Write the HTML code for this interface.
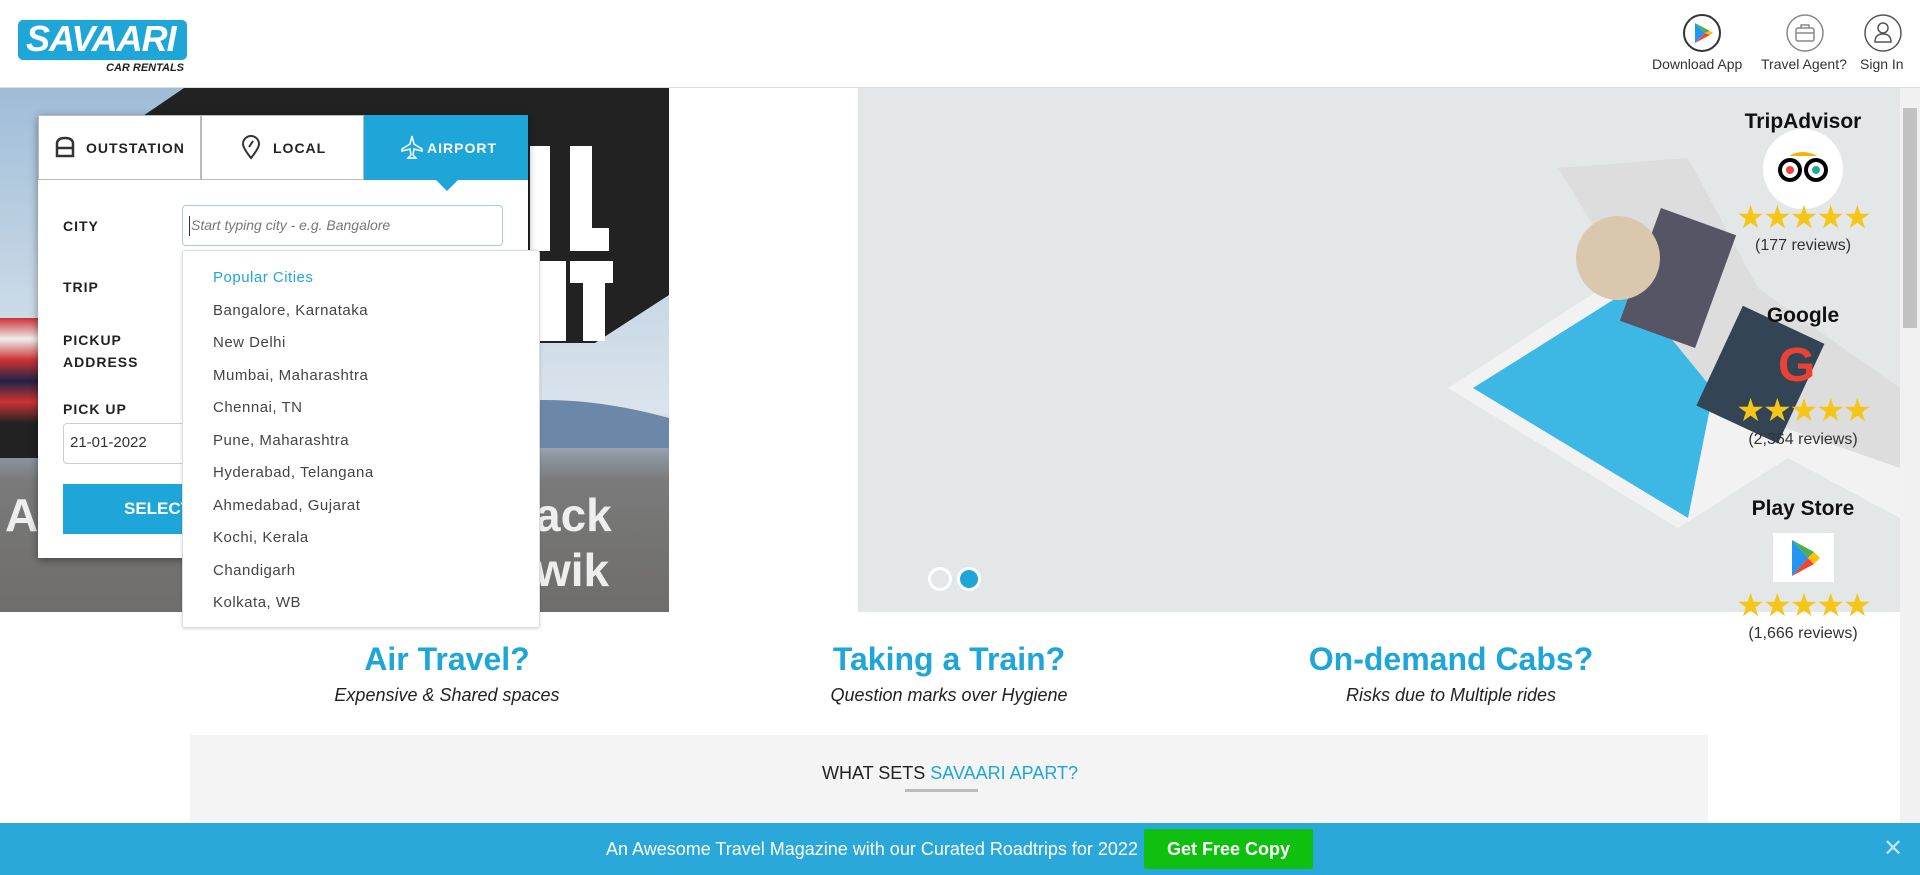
<!DOCTYPE html>
<html><head><meta charset="utf-8"><style>
*{margin:0;padding:0;box-sizing:border-box}
body{width:1920px;height:875px;overflow:hidden;background:#fff;font-family:"Liberation Sans","DejaVu Sans",sans-serif;position:relative;color:#333}
.a{position:absolute}
.hdr{left:0;top:0;width:1920px;height:88px;border-bottom:1px solid #ddd;background:#fff}
.lbl{font-size:14px;font-weight:bold;letter-spacing:1px;color:#222}
.city{font-size:15px;color:#444;letter-spacing:.5px;left:30px}
.star{color:#f5c518;font-size:32px;letter-spacing:-2px;width:140px;text-align:center}
.rv{font-size:16px;color:#333;width:200px;text-align:center}
h2{position:absolute;font-size:32px;color:#1fa6d9;font-weight:bold;width:500px;text-align:center}
.sub{position:absolute;font-size:18px;font-style:italic;color:#222;width:500px;text-align:center}
</style></head><body>
<div class="a hdr"></div>
<div class="a" style="left:18px;top:20px;width:169px;height:40px;background:#1fa6d9;border-radius:5px"></div>
<div class="a" style="left:26px;top:18px;font-size:36px;font-weight:bold;font-style:italic;color:#fff;letter-spacing:-1px">SAVAARI</div>
<div class="a" style="left:106px;top:62px;font-size:11px;font-weight:bold;font-style:italic;color:#222">CAR RENTALS</div>
<svg class="a" style="left:1682px;top:13px" width="40" height="40" viewBox="0 0 40 40"><circle cx="20" cy="20" r="18" fill="none" stroke="#333" stroke-width="2"/><path d="M13 10 L13 30 L23 20 Z" fill="#2196f3"/><path d="M13 10 L28 18 L23 20 Z" fill="#4caf50"/><path d="M13 30 L28 22 L23 20 Z" fill="#f44336"/><path d="M28 18 L31 20 L28 22 L23 20Z" fill="#ffc107"/></svg>
<svg class="a" style="left:1785px;top:13px" width="40" height="40" viewBox="0 0 40 40"><circle cx="20" cy="20" r="18" fill="none" stroke="#888" stroke-width="1.5"/><rect x="11" y="15" width="18" height="13" rx="2" fill="none" stroke="#888" stroke-width="1.5"/><path d="M16 15 V12 H24 V15 M11 20 H29" fill="none" stroke="#888" stroke-width="1.5"/></svg>
<svg class="a" style="left:1863px;top:13px" width="40" height="40" viewBox="0 0 40 40"><circle cx="20" cy="20" r="18" fill="none" stroke="#555" stroke-width="1.5"/><circle cx="20" cy="15" r="5" fill="none" stroke="#555" stroke-width="1.5"/><path d="M12 29 Q12 21 20 21 Q28 21 28 29 Z" fill="none" stroke="#555" stroke-width="1.5"/></svg>
<div class="a" style="left:1652px;top:56px;font-size:14px;color:#333">Download App</div>
<div class="a" style="left:1761px;top:56px;font-size:14px;color:#333">Travel Agent?</div>
<div class="a" style="left:1860px;top:56px;font-size:14px;color:#333">Sign In</div>
<!-- left hero -->
<div class="a" style="left:0;top:88px;width:669px;height:524px;overflow:hidden;background:linear-gradient(180deg,#9fbdd8 0%,#c8d8e6 40%,#dbe4ec 62%,#8e97a3 70%,#7a7a7a 75%,#6e6d6b 100%)">
<svg width="669" height="524" style="position:absolute;left:0;top:0"><polygon points="184,0 669,0 669,207 595,255 150,255 140,30" fill="#222"/>
<rect x="530" y="58" width="20" height="105" fill="#fff"/><rect x="570" y="58" width="22" height="105" fill="#fff"/><rect x="570" y="140" width="39" height="23" fill="#fff"/>
<rect x="538" y="173" width="28" height="80" fill="#fff"/><rect x="570" y="173" width="43" height="22" fill="#fff"/><rect x="583" y="173" width="22" height="80" fill="#fff"/>
<path d="M470 320 Q560 300 669 330 L669 360 L470 360Z" fill="#6c88a8"/>
</svg>
<div class="a" style="left:535px;top:400px;font-size:46px;font-weight:bold;color:#eee">ack</div>
<div class="a" style="left:535px;top:455px;font-size:46px;font-weight:bold;color:#eee">wik</div>
<div class="a" style="left:5px;top:400px;font-size:46px;font-weight:bold;color:#eee">A</div>
<div class="a" style="left:0;top:230px;width:38px;height:140px;background:linear-gradient(#c33 0,#eee 15%,#c33 30%,#224 45%,#c33 60%,#222 75%)"></div>
</div>
<!-- right banner -->
<div class="a" style="left:858px;top:88px;width:1042px;height:524px;background:#e4e7e8;overflow:hidden">
<svg width="1042" height="524" style="position:absolute;left:0;top:0">
<polygon points="590,300 790,170 900,200 1042,310 1042,430 930,370 820,440" fill="#f2f2f2"/>
<polygon points="615,300 790,190 870,230 830,430" fill="#3db7e4"/>
<polygon points="700,80 830,70 900,200 1042,300 1042,380 870,320 780,210" fill="#ddd"/>
<rect x="780" y="130" width="80" height="120" fill="#556" transform="rotate(20 820 190)"/>
<rect x="860" y="230" width="90" height="110" fill="#345" transform="rotate(25 900 280)"/>
<circle cx="760" cy="170" r="42" fill="#d9c8ad"/>
</svg>
<div class="a" style="left:70px;top:479px;width:24px;height:24px;border-radius:50%;border:3px solid #fff"></div>
<div class="a" style="left:99px;top:479px;width:24px;height:24px;border-radius:50%;background:#1fa6d9;border:3px solid #fff"></div>
</div>
<div class="a" style="left:1900px;top:88px;width:20px;height:735px;background:#f1f1f1"></div>
<div class="a" style="left:1903px;top:108px;width:14px;height:220px;background:#c1c1c1"></div>
<!-- ratings -->
<div class="a" style="left:1703px;top:110px;width:200px;text-align:center;font-size:21px;font-weight:bold;color:#111">TripAdvisor</div>
<div class="a" style="left:1763px;top:129px;width:80px;height:80px;border-radius:50%;background:#fff"></div>
<svg class="a" style="left:1775px;top:148px" width="56" height="40" viewBox="0 0 56 40"><path d="M14 8 Q28 0 42 8 Z" fill="#f5b400"/><circle cx="15" cy="22" r="12" fill="#000"/><circle cx="41" cy="22" r="12" fill="#000"/><circle cx="15" cy="22" r="8" fill="#fff"/><circle cx="41" cy="22" r="8" fill="#fff"/><circle cx="15" cy="22" r="4" fill="#e44"/><circle cx="41" cy="22" r="4" fill="#2a9"/></svg>
<div class="a star" style="left:1733px;top:198px">★★★★★</div>
<div class="a rv" style="left:1703px;top:237px">(177 reviews)</div>
<div class="a" style="left:1703px;top:304px;width:200px;text-align:center;font-size:21px;font-weight:bold;color:#111">Google</div>
<div class="a" style="left:1778px;top:338px;font-size:48px;font-weight:bold;color:#ea4335">G</div>
<div class="a star" style="left:1733px;top:391px">★★★★★</div>
<div class="a rv" style="left:1703px;top:431px">(2,364 reviews)</div>
<div class="a" style="left:1703px;top:497px;width:200px;text-align:center;font-size:21px;font-weight:bold;color:#111">Play Store</div>
<div class="a" style="left:1773px;top:533px;width:61px;height:49px;background:#fff"></div>
<svg class="a" style="left:1788px;top:538px" width="34" height="40" viewBox="0 0 34 40"><path d="M4 2 L4 38 L20 20Z" fill="#2196f3"/><path d="M4 2 L26 14 L20 20Z" fill="#4caf50"/><path d="M4 38 L26 26 L20 20Z" fill="#f44336"/><path d="M26 14 L32 20 L26 26 L20 20Z" fill="#ffc107"/></svg>
<div class="a star" style="left:1733px;top:586px">★★★★★</div>
<div class="a rv" style="left:1703px;top:625px">(1,666 reviews)</div>
<!-- form card -->
<div class="a" style="left:38px;top:115px;width:490px;height:443px;background:#fff;box-shadow:0 2px 8px rgba(0,0,0,.4)"></div>
<div class="a" style="left:38px;top:115px;width:163px;height:65px;border:1px solid #bbb;background:#fff"></div>
<div class="a" style="left:201px;top:115px;width:163px;height:65px;border:1px solid #bbb;background:#fff"></div>
<div class="a" style="left:364px;top:115px;width:164px;height:65px;background:#1fa6d9"></div>
<div class="a" style="left:435px;top:179px;width:0;height:0;border-left:12px solid transparent;border-right:12px solid transparent;border-top:12px solid #1fa6d9"></div>
<svg class="a" style="left:55px;top:136px" width="20" height="22" viewBox="0 0 20 22"><path d="M2 20 V8 Q2 2 10 2 Q18 2 18 8 V20 Z M2 12 H18" fill="none" stroke="#333" stroke-width="2.5"/></svg>
<div class="a lbl" style="left:86px;top:140px">OUTSTATION</div>
<svg class="a" style="left:241px;top:134px" width="20" height="26" viewBox="0 0 20 26"><path d="M10 24 Q2 14 2 10 A8 8 0 0 1 18 10 Q18 14 10 24Z" fill="none" stroke="#333" stroke-width="2"/><path d="M8 13 L12 7" stroke="#333" stroke-width="2"/></svg>
<div class="a lbl" style="left:273px;top:140px">LOCAL</div>
<svg class="a" style="left:400px;top:134px" width="24" height="26" viewBox="0 0 24 26"><path d="M12 2 L14 10 L22 15 V17 L14 15 L13 21 L16 24 H8 L11 21 L10 15 L2 17 V15 L10 10Z" fill="none" stroke="#fff" stroke-width="1.5"/></svg>
<div class="a lbl" style="left:427px;top:140px;color:#fff">AIRPORT</div>
<div class="a lbl" style="left:63px;top:218px">CITY</div>
<div class="a" style="left:182px;top:205px;width:321px;height:41px;border:1px solid #a8c8e8;border-radius:4px;background:#fff"></div>
<div class="a" style="left:189px;top:216px;width:1px;height:20px;background:#333"></div>
<div class="a" style="left:191px;top:217px;font-size:14px;font-style:italic;color:#777">Start typing city - e.g. Bangalore</div>
<div class="a lbl" style="left:63px;top:279px">TRIP</div>
<div class="a lbl" style="left:63px;top:332px">PICKUP</div>
<div class="a lbl" style="left:63px;top:354px">ADDRESS</div>
<div class="a lbl" style="left:63px;top:401px">PICK UP</div>
<div class="a" style="left:63px;top:423px;width:130px;height:41px;border:1px solid #ccc;border-radius:4px"></div>
<div class="a" style="left:70px;top:434px;font-size:15px;color:#333">21-01-2022</div>
<div class="a" style="left:63px;top:484px;width:130px;height:50px;background:#1fa6d9"></div>
<div class="a" style="left:124px;top:499px;font-size:17px;font-weight:bold;color:#fff">SELECT</div>
<div class="a" style="left:182px;top:250px;width:358px;height:378px;background:#fff;border:1px solid #ddd;border-radius:3px;box-shadow:0 1px 3px rgba(0,0,0,.15)">
<div class="a city" style="top:18px;color:#1fa6d9">Popular Cities</div>
<div class="a city" style="top:51px">Bangalore, Karnataka</div>
<div class="a city" style="top:83px">New Delhi</div>
<div class="a city" style="top:116px">Mumbai, Maharashtra</div>
<div class="a city" style="top:148px">Chennai, TN</div>
<div class="a city" style="top:181px">Pune, Maharashtra</div>
<div class="a city" style="top:213px">Hyderabad, Telangana</div>
<div class="a city" style="top:246px">Ahmedabad, Gujarat</div>
<div class="a city" style="top:278px">Kochi, Kerala</div>
<div class="a city" style="top:311px">Chandigarh</div>
<div class="a city" style="top:343px">Kolkata, WB</div>
</div>
<h2 style="left:197px;top:641px">Air Travel?</h2>
<h2 style="left:699px;top:641px">Taking a Train?</h2>
<h2 style="left:1201px;top:641px">On-demand Cabs?</h2>
<div class="sub" style="left:197px;top:685px">Expensive &amp; Shared spaces</div>
<div class="sub" style="left:699px;top:685px">Question marks over Hygiene</div>
<div class="sub" style="left:1201px;top:685px">Risks due to Multiple rides</div>
<div class="a" style="left:190px;top:735px;width:1518px;height:100px;background:#f4f4f4"></div>
<div class="a" style="left:690px;top:763px;width:520px;text-align:center;font-size:18px;color:#222">WHAT SETS <span style="color:#1fa6d9">SAVAARI APART?</span></div>
<div class="a" style="left:905px;top:789px;width:73px;height:3px;background:#bbb"></div>
<div class="a" style="left:0;top:823px;width:1920px;height:52px;background:#29a8d9"></div>
<div class="a" style="left:606px;top:839px;font-size:18px;color:#fff">An Awesome Travel Magazine with our Curated Roadtrips for 2022</div>
<div class="a" style="left:1144px;top:829px;width:169px;height:40px;background:#10c010;border-radius:2px;color:#fff;font-size:18px;font-weight:bold;text-align:center;line-height:40px">Get Free Copy</div>
<div class="a" style="left:1883px;top:834px;font-size:24px;color:#bfe4f3">✕</div>
</body></html>
